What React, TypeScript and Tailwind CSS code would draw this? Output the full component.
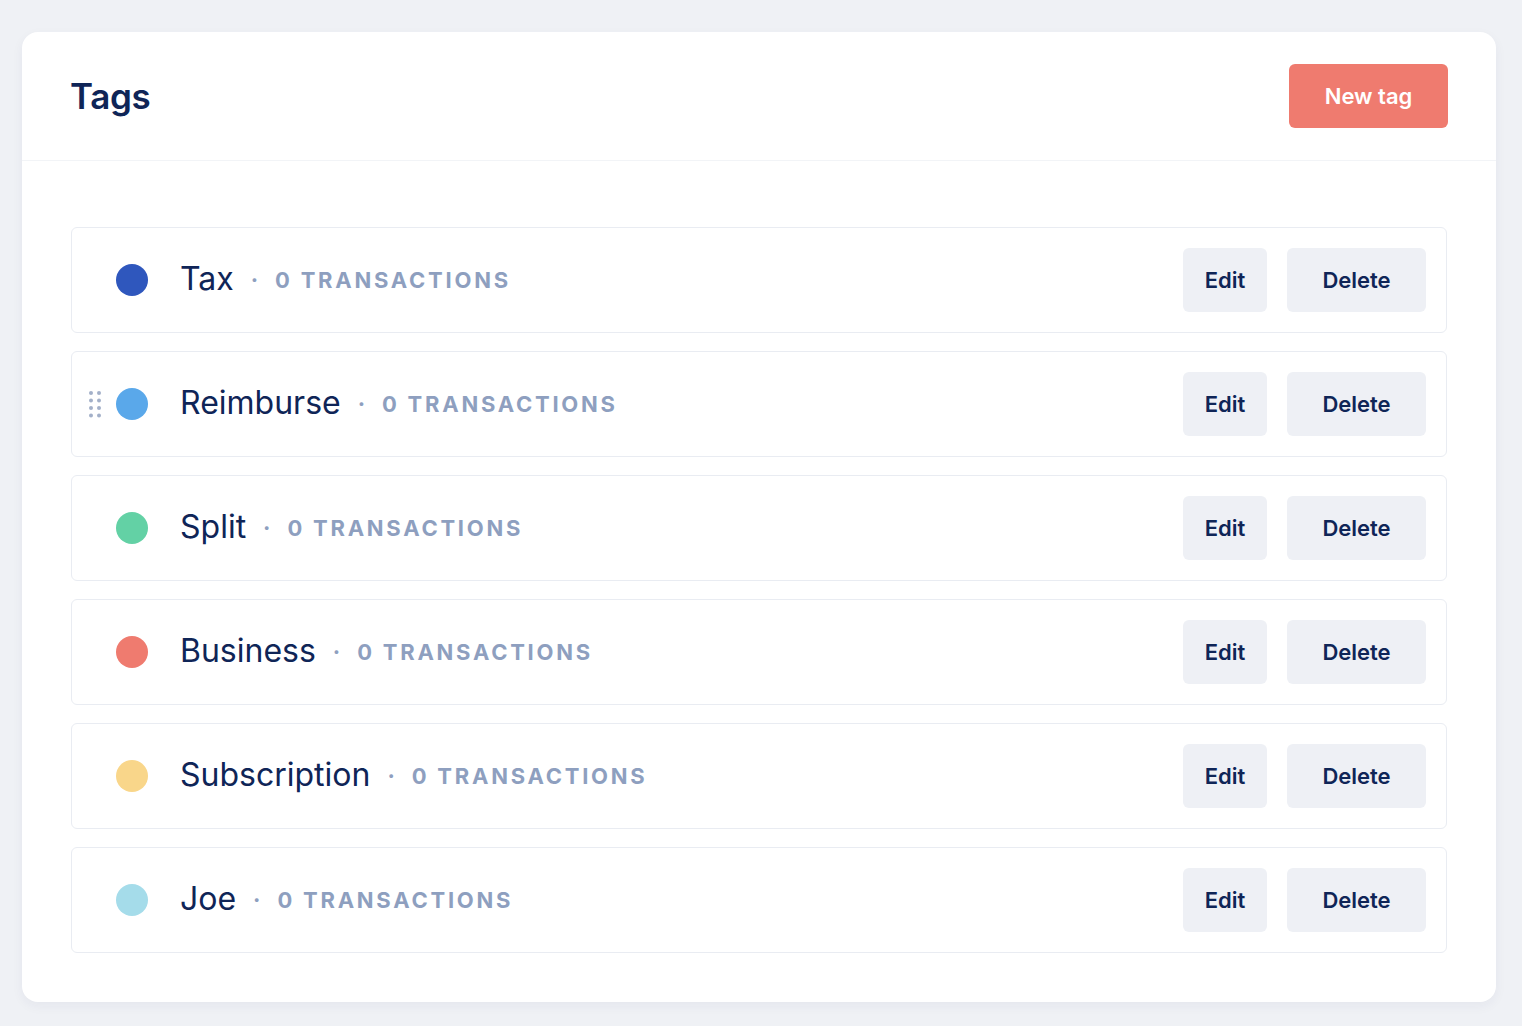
import React from 'react'

interface Tag {
  id: string
  name: string
  color: string
  count: number
}

const tags: Tag[] = [
  { id: 'tax', name: 'Tax', color: 'bg-[#2f57bd]', count: 0 },
  { id: 'reimburse', name: 'Reimburse', color: 'bg-[#5aa8ea]', count: 0 },
  { id: 'split', name: 'Split', color: 'bg-[#63d1a5]', count: 0 },
  { id: 'business', name: 'Business', color: 'bg-[#ef7b6f]', count: 0 },
  { id: 'subscription', name: 'Subscription', color: 'bg-[#f9d68a]', count: 0 },
  { id: 'joe', name: 'Joe', color: 'bg-[#a5dcea]', count: 0 },
]

function DragHandle() {
  return (
    <svg className="absolute left-[16px] top-1/2 -translate-y-1/2" width="14" height="30" viewBox="0 0 14 30" fill="#a3b0c9">
      {[0, 1, 2, 3].map((r) => (
        <React.Fragment key={r}>
          <circle cx="3" cy={4 + r * 7.5} r="2" />
          <circle cx="11" cy={4 + r * 7.5} r="2" />
        </React.Fragment>
      ))}
    </svg>
  )
}

export default function App() {
  return (
    <div className="min-h-screen bg-[#eff1f5] pl-[22px] pr-[26px] pt-[32px] pb-6 font-['Inter',sans-serif] text-[#0f2557]">
      <div className="bg-white rounded-[16px] shadow-[0_4px_12px_rgba(30,45,90,0.05)]">
        {/* Header */}
        <div className="h-[129px] flex items-center justify-between pl-[48px] pr-[48px] border-b border-[#f2f4f7]">
          <h1 className="text-[35px] font-semibold tracking-[-0.01em]">Tags</h1>
          <button className="w-[159px] h-[64px] rounded-[6px] bg-[#ef7b6f] text-white text-[22px] font-semibold">
            New tag
          </button>
        </div>

        {/* List */}
        <div className="px-[49px] pt-[66px] pb-[49px] flex flex-col gap-[18px]">
          {tags.map((tag, i) => (
            <div
              key={tag.id}
              className="relative h-[106px] flex items-center border border-[#e9ecf2] rounded-[6px] pl-[44px] pr-[20px]"
            >
              {i === 1 && <DragHandle />}
              <span className={`w-[32px] h-[32px] rounded-full ${tag.color}`} />
              <span className="ml-[32px] text-[32px] font-normal leading-none -mt-[2px]">{tag.name}</span>
              <span className="mx-[17px] text-[#8e9fbf] text-[22px] font-bold leading-none">·</span>
              <span className="text-[22px] font-bold tracking-[0.125em] uppercase text-[#8e9fbf] leading-none">
                {tag.count} Transactions
              </span>
              <div className="ml-auto flex gap-[20px]">
                <button className="w-[84px] h-[64px] rounded-[6px] bg-[#eef0f5] text-[22px] font-semibold">Edit</button>
                <button className="w-[139px] h-[64px] rounded-[6px] bg-[#eef0f5] text-[22px] font-semibold">Delete</button>
              </div>
            </div>
          ))}
        </div>
      </div>
    </div>
  )
}
